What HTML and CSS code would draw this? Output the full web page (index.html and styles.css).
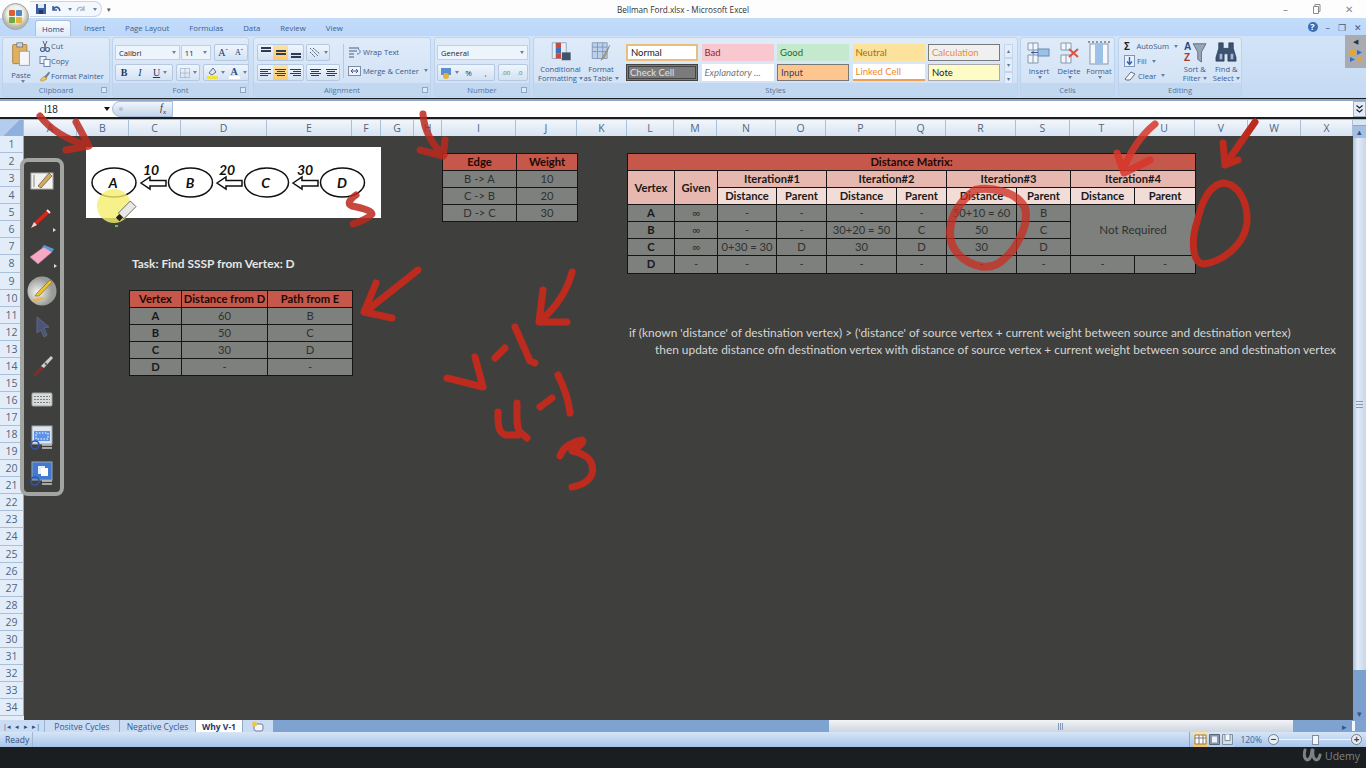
FILE: index.html
```html
<!DOCTYPE html>
<html lang="en">
<head>
    <meta charset="UTF-8">
    <title>Bellman Ford.xlsx - Microsoft Excel</title>
    <link rel="stylesheet" href="styles.css">
</head>
<body>
<div class="window">

    <!-- Title bar -->
    <div class="titlebar">
        <div class="qat">
            <svg width="12" height="12" viewBox="0 0 12 12"><rect x="1" y="1" width="10" height="10" fill="#3a5f9e"/><rect x="3" y="1" width="6" height="4" fill="#dfe8f5"/><rect x="4" y="7" width="4" height="4" fill="#1f3a6a"/></svg>
            <svg width="12" height="12" viewBox="0 0 12 12"><path d="M3 3 L3 7 L7 7 M3 7 C5 3 9 3 10 8" fill="none" stroke="#3a5f9e" stroke-width="1.6"/></svg>
            <span class="caret"></span>
            <svg width="12" height="12" viewBox="0 0 12 12"><path d="M9 3 L9 7 L5 7 M9 7 C7 3 3 3 2 8" fill="none" stroke="#a9b8cc" stroke-width="1.4"/></svg>
            <span class="caret"></span>
        </div>
        <span class="qat-more">&#9662;</span>
        <div class="title">Bellman Ford.xlsx - Microsoft Excel</div>
        <div class="winbtns">
            <span>&#8211;</span>
            <svg width="9" height="10" viewBox="0 0 9 10"><path d="M1.5 2.5h5v7h-5z M3 2.5v-2h5v7h-1.5" fill="none" stroke="#8a8a8a"/></svg>
            <span>&#10005;</span>
        </div>
    </div>

    <!-- Ribbon tabs -->
    <div class="tabs">
        <span class="tab active">Home</span>
        <span class="tab">Insert</span>
        <span class="tab">Page Layout</span>
        <span class="tab">Formulas</span>
        <span class="tab">Data</span>
        <span class="tab">Review</span>
        <span class="tab">View</span>
        <div class="tabs-right">
            <span class="help">?</span><span>&#8211;</span><span>&#10064;</span><span>&#10005;</span>
        </div>
    </div>

    <!-- Ribbon -->
    <div class="ribbon">
        <div class="group clipboard">
            <div class="group-body">
                <div class="big-btn paste">
                    <svg width="22" height="30" viewBox="0 0 22 30"><rect x="1" y="3" width="17" height="23" rx="1" fill="#e0b060" stroke="#a67b32"/><rect x="6" y="1" width="7" height="5" fill="#cfd6de" stroke="#777"/><rect x="9" y="11" width="12" height="17" fill="#f4f6f9" stroke="#8b97a6"/></svg>
                    <span>Paste</span>
                    <span class="caret"></span>
                </div>
                <div class="small-list">
                    <div class="small-item">
                        <svg width="12" height="12" viewBox="0 0 12 12"><path d="M4 1 L7 8 M8 1 L5 8" stroke="#5a6470" fill="none"/><circle cx="3.5" cy="9.5" r="2" fill="none" stroke="#46618c" stroke-width="1.2"/><circle cx="8.5" cy="9.5" r="2" fill="none" stroke="#46618c" stroke-width="1.2"/></svg>
                        Cut
                    </div>
                    <div class="small-item">
                        <svg width="12" height="12" viewBox="0 0 12 12"><rect x="1" y="1.5" width="6" height="7" fill="#eef2f8" stroke="#6b86ad"/><rect x="5" y="4.5" width="6" height="7" fill="#f8fafc" stroke="#6b86ad"/></svg>
                        Copy
                    </div>
                    <div class="small-item">
                        <svg width="12" height="12" viewBox="0 0 12 12"><path d="M5 7 L10 1.5 L11 3 L7 8.5 Z" fill="#6b7f9a"/><path d="M1 10 L5 6 L8 9 L3 11.5 Z" fill="#e8c25c" stroke="#a88425" stroke-width=".5"/></svg>
                        Format Painter
                    </div>
                </div>
            </div>
            <div class="group-label">Clipboard<i class="launcher"></i></div>
        </div>

        <div class="group font">
            <div class="group-body rows">
                <div class="row">
                    <span class="combo font-name">Calibri<span class="caret"></span></span>
                    <span class="combo font-size">11<span class="caret"></span></span>
                    <span class="btn-set">
                        <span class="btn serif">A<sup>&#710;</sup></span>
                        <span class="btn serif small">A<sup>&#711;</sup></span>
                    </span>
                </div>
                <div class="row">
                    <span class="btn-set">
                        <span class="btn serif"><b>B</b></span>
                        <span class="btn serif"><i>I</i></span>
                        <span class="btn serif underline"><u>U</u><span class="caret"></span></span>
                    </span>
                    <span class="btn-set">
                        <span class="btn wide">
                            <svg width="12" height="12" viewBox="0 0 12 12"><path d="M1.5 1.5h9v9h-9z M6 1.5v9 M1.5 6h9" fill="none" stroke="#8d9db3" stroke-dasharray="1 1"/></svg>
                            <span class="caret"></span>
                        </span>
                    </span>
                    <span class="btn-set">
                        <span class="btn wide">
                            <svg width="13" height="13" viewBox="0 0 13 13"><path d="M3 7 L7 2 L10 6 L6 9 Z" fill="#dfe6ef" stroke="#5a6f8c"/><rect x="1" y="10" width="11" height="3" fill="#f0e23a"/></svg>
                            <span class="caret"></span>
                        </span>
                        <span class="btn wide">
                            <svg width="13" height="13" viewBox="0 0 13 13"><text x="2.5" y="9" class="svg-a">A</text><rect x="1" y="10" width="11" height="3" fill="#fff"/></svg>
                            <span class="caret"></span>
                        </span>
                    </span>
                </div>
            </div>
            <div class="group-label">Font<i class="launcher"></i></div>
        </div>

        <div class="group alignment">
            <div class="group-body align-body">
                <div class="rows">
                    <div class="row">
                        <span class="btn-set">
                            <span class="btn bars top"><i></i><i></i></span>
                            <span class="btn bars mid on"><i></i><i></i></span>
                            <span class="btn bars bot"><i></i><i></i></span>
                        </span>
                        <span class="btn-set">
                            <span class="btn wide">
                                <svg width="13" height="12" viewBox="0 0 13 12"><path d="M1 1 L9 9 M4 1 L11 7 M1 5 L6 10" stroke="#4a5f7c" stroke-dasharray="2 1" fill="none"/></svg>
                                <span class="caret"></span>
                            </span>
                        </span>
                    </div>
                    <div class="row">
                        <span class="btn-set">
                            <span class="btn lines left"><i></i><i></i><i></i><i></i></span>
                            <span class="btn lines center on"><i></i><i></i><i></i><i></i></span>
                            <span class="btn lines right"><i></i><i></i><i></i><i></i></span>
                        </span>
                        <span class="btn-set">
                            <span class="btn lines center"><i></i><i></i><i></i><i></i></span>
                            <span class="btn lines center"><i></i><i></i><i></i><i></i></span>
                        </span>
                    </div>
                </div>
                <div class="small-list wrap-list">
                    <div class="small-item">
                        <svg width="13" height="12" viewBox="0 0 13 12"><path d="M1 2h10 M1 5h8 M1 8h5 M1 11h5" stroke="#4a5f7c" fill="none"/><path d="M10 3c3 1 3 5-1 5" stroke="#3d78c4" fill="none"/></svg>
                        Wrap Text
                    </div>
                    <div class="small-item">
                        <svg width="13" height="12" viewBox="0 0 13 12"><rect x=".5" y="1.5" width="12" height="9" fill="#eef3fa" stroke="#7d8ea6"/><path d="M3 6h7 M3 6l2-2 M3 6l2 2 M10 6l-2-2 M10 6l-2 2" stroke="#3d5a8a" fill="none"/></svg>
                        Merge &amp; Center<span class="caret"></span>
                    </div>
                </div>
            </div>
            <div class="group-label">Alignment<i class="launcher"></i></div>
        </div>

        <div class="group number">
            <div class="group-body rows">
                <div class="row">
                    <span class="combo number-format">General<span class="caret"></span></span>
                </div>
                <div class="row">
                    <span class="btn-set">
                        <span class="btn wide">
                            <svg width="13" height="12" viewBox="0 0 13 12"><rect x="1" y="1" width="10" height="7" fill="#5b8fd0"/><circle cx="6" cy="9" r="3" fill="#e3b43c"/></svg>
                            <span class="caret"></span>
                        </span>
                        <span class="btn num-btn">%</span>
                        <span class="btn num-btn">,</span>
                    </span>
                    <span class="btn-set">
                        <span class="btn num-tiny">.00</span>
                        <span class="btn num-tiny">.0</span>
                    </span>
                </div>
            </div>
            <div class="group-label">Number<i class="launcher"></i></div>
        </div>

        <div class="group styles">
            <div class="group-body styles-body">
                <div class="big-btn cond">
                    <svg width="24" height="24" viewBox="0 0 24 24"><path d="M2 2h16v18H2z" fill="#e8eef6" stroke="#8ea3c0"/><rect x="6" y="2" width="6" height="6" fill="#c84a3e"/><rect x="6" y="8" width="6" height="6" fill="#3f6fb8"/><rect x="6" y="14" width="6" height="6" fill="#c84a3e"/><rect x="13" y="13" width="10" height="9" fill="#42526a"/></svg>
                    <span>Conditional</span>
                    <span>Formatting<i class="caret"></i></span>
                </div>
                <div class="big-btn astable">
                    <svg width="24" height="24" viewBox="0 0 24 24"><path d="M2 2h17v18H2z" fill="#bcd0ea" stroke="#7d96b8"/><path d="M2 7h17 M2 12h17 M8 2v18 M14 2v18" stroke="#7d96b8"/><path d="M22 5 L14 18 L12 22 L16 19 Z" fill="#c9a25a" stroke="#76777a" stroke-width=".6"/></svg>
                    <span>Format</span>
                    <span>as Table<i class="caret"></i></span>
                </div>
                <div class="gallery">
                    <span class="style s-normal">Normal</span>
                    <span class="style s-bad">Bad</span>
                    <span class="style s-good">Good</span>
                    <span class="style s-neutral">Neutral</span>
                    <span class="style s-calc">Calculation</span>
                    <span class="style s-check">Check Cell</span>
                    <span class="style s-expl">Explanatory ...</span>
                    <span class="style s-input">Input</span>
                    <span class="style s-linked">Linked Cell</span>
                    <span class="style s-note">Note</span>
                </div>
                <div class="gallery-scroll"><i>&#9652;</i><i>&#9662;</i><i>&#9662;</i></div>
            </div>
            <div class="group-label">Styles</div>
        </div>

        <div class="group cells">
            <div class="group-body cells-body">
                <div class="big-btn cell-btn">
                    <svg width="24" height="24" viewBox="0 0 24 24"><path d="M1 2h10v7H1z M1 14h10v8H1z M6 2v7 M6 14v8" fill="#f2f5f9" stroke="#8698b0"/><rect x="11" y="8" width="11" height="7" fill="#9dc0e8" stroke="#6a8ab4"/><path d="M4 11.5h7 M7 9.5l-2 2 2 2" stroke="#3b5a85" fill="none"/></svg>
                    <span>Insert</span><i class="caret"></i>
                </div>
                <div class="big-btn cell-btn">
                    <svg width="24" height="24" viewBox="0 0 24 24"><path d="M4 2h10v7H4z M4 14h10v8H4z M9 2v7 M9 14v8" fill="#f2f5f9" stroke="#8698b0"/><path d="M12 8 L21 16 M21 8 L12 16" stroke="#d9533f" stroke-width="2"/></svg>
                    <span>Delete</span><i class="caret"></i>
                </div>
                <div class="big-btn cell-btn">
                    <svg width="24" height="24" viewBox="0 0 24 24"><rect x="3" y="3" width="18" height="20" fill="#f4f7fb" stroke="#8698b0"/><rect x="8" y="3" width="8" height="20" fill="#9dc0e8"/><path d="M1 1h22" stroke="#444" stroke-dasharray="2 2"/></svg>
                    <span>Format</span><i class="caret"></i>
                </div>
            </div>
            <div class="group-label">Cells</div>
        </div>

        <div class="group editing">
            <div class="group-body editing-body">
                <div class="small-list">
                    <div class="small-item"><span class="sigma">&#931;</span>AutoSum<span class="caret"></span></div>
                    <div class="small-item">
                        <svg width="11" height="12" viewBox="0 0 11 12"><rect x=".5" y=".5" width="10" height="11" fill="#eaf1fb" stroke="#7f97bb"/><path d="M5.5 2v7 M3 6.5l2.5 3 2.5-3" stroke="#2c63b5" fill="none" stroke-width="1.4"/></svg>
                        Fill<span class="caret"></span>
                    </div>
                    <div class="small-item">
                        <svg width="12" height="12" viewBox="0 0 12 12"><path d="M1 9 L7 2 L11 4 L6 10 H2 Z" fill="#f5f7fa" stroke="#5f6f86"/></svg>
                        Clear<span class="caret"></span>
                    </div>
                </div>
                <div class="big-btn sort-btn">
                    <svg width="26" height="24" viewBox="0 0 26 24"><text x="1" y="10" class="svg-az">A</text><text x="1" y="22" class="svg-az az-red">Z</text><path d="M11 3 H25 L20 12 V23 L16 20 V12 Z" fill="#9aa6b6" stroke="#5d6b80"/></svg>
                    <span>Sort &amp;</span>
                    <span>Filter<i class="caret"></i></span>
                </div>
                <div class="big-btn sort-btn">
                    <svg width="24" height="24" viewBox="0 0 24 24"><path d="M4 2h5v6h6V2h5v6l3 10v4h-9v-8H10v8H1v-4L4 8z" fill="#3d5270" stroke="#1f2f47" stroke-width=".6"/><rect x="5" y="14" width="3" height="6" fill="#9fb6d6"/><rect x="17" y="14" width="3" height="6" fill="#9fb6d6"/></svg>
                    <span>Find &amp;</span>
                    <span>Select<i class="caret"></i></span>
                </div>
            </div>
            <div class="group-label">Editing</div>
        </div>

        <div class="ribbon-side">
            <span class="side-arrow">&#9664;</span>
            <svg width="14" height="14" viewBox="0 0 14 14"><rect x="1" y="1" width="5" height="5" fill="#e2a63b"/><path d="M8 1 L13 3.5 L8 6 Z" fill="#2f6fc4"/><path d="M1 8 L6 10.5 L1 13 Z" fill="#2f6fc4"/><rect x="8" y="8" width="5" height="5" fill="#e2a63b"/></svg>
        </div>
    </div>

    <!-- Formula bar -->
    <div class="formula">
        <div class="namebox">I18<span class="caret dark"></span></div>
        <div class="fx-btn"><i class="fx-dot"></i><span>f<sub>x</sub></span></div>
        <div class="formula-input"></div>
        <div class="formula-expand">
            <svg width="9" height="10" viewBox="0 0 9 10"><path d="M1.5 1.5 L4.5 4 L7.5 1.5 M1.5 5.5 L4.5 8 L7.5 5.5" fill="none" stroke="#222" stroke-width="1.2"/></svg>
        </div>
    </div>

    <!-- Worksheet -->
    <div class="book">
        <div class="book-main">
            <div class="col-head">
                <span class="corner"></span>
                <span>A</span><span>B</span><span>C</span><span>D</span><span>E</span><span>F</span>
                <span>G</span><span>H</span><span>I</span><span>J</span><span>K</span><span>L</span>
                <span>M</span><span>N</span><span>O</span><span>P</span><span>Q</span><span>R</span>
                <span>S</span><span>T</span><span>U</span><span>V</span><span>W</span><span>X</span>
            </div>
            <div class="sheet-wrap">
                <div class="row-head">
                    <span>1</span><span>2</span><span>3</span><span>4</span><span>5</span><span>6</span><span>7</span>
                    <span>8</span><span>9</span><span>10</span><span>11</span><span>12</span><span>13</span><span>14</span>
                    <span>15</span><span>16</span><span>17</span><span>18</span><span>19</span><span>20</span><span>21</span>
                    <span>22</span><span>23</span><span>24</span><span>25</span><span>26</span><span>27</span><span>28</span>
                    <span>29</span><span>30</span><span>31</span><span>32</span><span>33</span><span>34</span>
                </div>
                <div class="sheet">
                    <div class="diagram">
                        <svg width="295" height="71" viewBox="0 0 295 71">
                            <ellipse cx="28" cy="35.5" rx="22" ry="14.5" class="node"/>
                            <ellipse cx="104.5" cy="35.5" rx="22" ry="14.5" class="node"/>
                            <ellipse cx="180.5" cy="35.5" rx="22" ry="14.5" class="node"/>
                            <ellipse cx="256.5" cy="35.5" rx="22" ry="14.5" class="node"/>
                            <text x="27" y="40.5" class="node-text">A</text>
                            <text x="104" y="40.5" class="node-text">B</text>
                            <text x="179.5" y="40.5" class="node-text">C</text>
                            <text x="256" y="40.5" class="node-text">D</text>
                            <path d="M55 36 L64 30 V33.5 H80 V39 H64 V42 Z" class="edge"/>
                            <path d="M131 36 L140 30 V33.5 H156 V39 H140 V42 Z" class="edge"/>
                            <path d="M207 36 L216 30 V33.5 H232 V39 H216 V42 Z" class="edge"/>
                            <text x="65" y="28" class="weight-text">10</text>
                            <text x="141" y="28" class="weight-text">20</text>
                            <text x="219" y="28" class="weight-text">30</text>
                        </svg>
                    </div>

                    <div class="edges">
                        <table>
                            <colgroup><col class="w74"><col class="w61"></colgroup>
                            <tr><th class="red">Edge</th><th class="red">Weight</th></tr>
                            <tr><td>B -&gt; A</td><td>10</td></tr>
                            <tr><td>C -&gt; B</td><td>20</td></tr>
                            <tr><td>D -&gt; C</td><td>30</td></tr>
                        </table>
                    </div>

                    <div class="matrix">
                        <table>
                            <colgroup>
                                <col class="w47"><col class="w43"><col class="w59"><col class="w50"><col class="w70">
                                <col class="w50"><col class="w70"><col class="w54"><col class="w64"><col class="w61">
                            </colgroup>
                            <tr><th class="red" colspan="10">Distance Matrix:</th></tr>
                            <tr>
                                <th class="pink" rowspan="2">Vertex</th>
                                <th class="pink" rowspan="2">Given</th>
                                <th class="pink" colspan="2">Iteration#1</th>
                                <th class="pink" colspan="2">Iteration#2</th>
                                <th class="pink" colspan="2">Iteration#3</th>
                                <th class="pink" colspan="2">Iteration#4</th>
                            </tr>
                            <tr>
                                <th class="pale">Distance</th><th class="pale">Parent</th>
                                <th class="pale">Distance</th><th class="pale">Parent</th>
                                <th class="pale">Distance</th><th class="pale">Parent</th>
                                <th class="pale">Distance</th><th class="pale">Parent</th>
                            </tr>
                            <tr>
                                <th>A</th><td>&#8734;</td><td>-</td><td>-</td><td>-</td><td>-</td><td>50+10 = 60</td><td>B</td>
                                <td class="not-required" colspan="2" rowspan="3">Not Required</td>
                            </tr>
                            <tr><th>B</th><td>&#8734;</td><td>-</td><td>-</td><td>30+20 = 50</td><td>C</td><td>50</td><td>C</td></tr>
                            <tr><th>C</th><td>&#8734;</td><td>0+30 = 30</td><td>D</td><td>30</td><td>D</td><td>30</td><td>D</td></tr>
                            <tr><th>D</th><td>-</td><td>-</td><td>-</td><td>-</td><td>-</td><td>-</td><td>-</td><td>-</td><td>-</td></tr>
                        </table>
                    </div>

                    <div class="task">Task: Find SSSP from Vertex: D</div>

                    <div class="answer">
                        <table>
                            <colgroup><col class="w52"><col class="w86"><col class="w85"></colgroup>
                            <tr><th class="red">Vertex</th><th class="red">Distance from D</th><th class="red">Path from E</th></tr>
                            <tr><th>A</th><td>60</td><td>B</td></tr>
                            <tr><th>B</th><td>50</td><td>C</td></tr>
                            <tr><th>C</th><td>30</td><td>D</td></tr>
                            <tr><th>D</th><td>-</td><td>-</td></tr>
                        </table>
                    </div>

                    <div class="note note-if">if (known 'distance' of destination vertex) &gt; ('distance' of source vertex + current weight between source and destination vertex)</div>
                    <div class="note note-then">then update distance ofn destination vertex with distance of source vertex + current weight between source and destination vertex</div>
                </div>
            </div>
        </div>
        <div class="vscroll">
            <i class="split"></i>
            <span class="arrow up">&#9652;</span>
            <div class="thumb"><i class="grip"></i></div>
            <div class="track"></div>
            <span class="arrow down">&#9662;</span>
        </div>
    </div>

    <!-- Sheet tabs and scrollbar -->
    <div class="sheet-tabs">
        <div class="tab-nav"><span>|&#9666;</span><span>&#9666;</span><span>&#9656;</span><span>&#9656;|</span></div>
        <span class="stab first">Positve Cycles</span>
        <span class="stab second">Negative Cycles</span>
        <span class="stab current">Why V-1</span>
        <span class="stab add">
            <svg width="14" height="11" viewBox="0 0 14 11"><rect x="3" y="3" width="9" height="7" rx="2" fill="#f3f6fb" stroke="#6e7f96"/><circle cx="3.5" cy="3" r="2.5" fill="#f2c34a"/></svg>
        </span>
        <div class="hscroll">
            <div class="hthumb"><i class="grip"></i></div>
            <span class="harrow">&#9656;</span>
            <i class="hsplit"></i>
        </div>
    </div>

    <!-- Status bar -->
    <div class="status">
        <span class="ready">Ready</span>
        <div class="status-right">
            <div class="views">
                <span class="view on"><svg width="13" height="11" viewBox="0 0 13 11"><path d="M1 1h11v9H1z M1 4h11 M5 1v9 M9 1v9" fill="#fff" stroke="#7d7d72"/></svg></span>
                <span class="view"><svg width="13" height="11" viewBox="0 0 13 11"><path d="M1.5 .5h10v10h-10z" fill="#8796a8" stroke="#58677a"/><rect x="4" y="2.5" width="5" height="6" fill="#eef2f8"/></svg></span>
                <span class="view"><svg width="13" height="11" viewBox="0 0 13 11"><path d="M1.5 .5h10v10h-10z" fill="#d4dde8" stroke="#7e8ea2"/><path d="M4 .5v6h5v-6" fill="#f7f9fc" stroke="#7e8ea2"/></svg></span>
            </div>
            <span class="zoom-val">120%</span>
            <span class="zoom-btn">&#8722;</span>
            <div class="slider"><i class="slider-thumb"></i></div>
            <span class="zoom-btn">+</span>
        </div>
    </div>

    <!-- Video strip under the window -->
    <div class="bottom">
        <div class="udemy">
            <svg width="20" height="15" viewBox="0 0 20 15"><path d="M3 3 Q1 11 5 13 Q9 13 10 3 M11 3 Q10 11 14 13 Q17 13 18 8" fill="none" stroke="#7f8284" stroke-width="3" stroke-linecap="round"/></svg>
            <span>Udemy</span>
        </div>
    </div>
</div>

<!-- Office button, lies over the title bar and tabs -->
<div class="office-btn">
    <svg width="27" height="27" viewBox="0 0 27 27">
        <defs><radialGradient id="orb" cx=".5" cy=".4"><stop offset=".6" stop-color="#f3f2ea"/><stop offset="1" stop-color="#b9b8a2"/></radialGradient></defs>
        <circle cx="13.5" cy="13.5" r="13" fill="url(#orb)" stroke="#9aa5b5"/>
        <rect x="7" y="7" width="6" height="6" rx="1" fill="#d8622f"/>
        <rect x="14" y="7" width="6" height="6" rx="1" fill="#4b86c6"/>
        <rect x="7" y="14" width="6" height="6" rx="1" fill="#6da944"/>
        <rect x="14" y="14" width="6" height="6" rx="1" fill="#e4b63c"/>
    </svg>
</div>

<!-- Pen palette floating over the sheet -->
<div class="palette">
    <svg width="26" height="28" viewBox="0 0 26 28"><rect x="2" y="6" width="22" height="16" fill="#f2f2f0" stroke="#aaa"/><rect x="4" y="8" width="2" height="12" fill="#bbb"/><path d="M9 19 L20 6 L23 9 L12 21 Z" fill="#d7a85a" stroke="#555" stroke-width=".7"/></svg>
    <svg width="30" height="28" viewBox="0 0 30 28"><path d="M4 24 L7 18 L21 5 L24 8 L10 21 Z" fill="#cf2a20" stroke="#7c1a14" stroke-width=".6"/><path d="M20 6 L23 9" stroke="#eee" stroke-width="2"/><path d="M4 24 L7 18 L10 21 Z" fill="#ddd"/><path d="M26 24 L29 26 L26 28 Z" fill="#ddd"/></svg>
    <svg width="30" height="28" viewBox="0 0 30 28"><path d="M3 17 L17 7 L25 12 L11 24 Z" fill="#f4a8c4" stroke="#c77d9c" stroke-width=".5"/><path d="M14 9 L17 5 L27 9 L25 12 L17 7 Z" fill="#4f9fe0"/><path d="M27 24 L30 26 L27 28 Z" fill="#ddd"/></svg>
    <svg width="30" height="30" viewBox="0 0 30 30"><defs><radialGradient id="penGlow" cx=".35" cy=".55"><stop offset="0" stop-color="#f6f6f2"/><stop offset="1" stop-color="#9a9c97"/></radialGradient></defs><circle cx="15" cy="15" r="14.5" fill="url(#penGlow)"/><path d="M8 20 L10 17 L23 4 L25 6 L12 20 Z" fill="#eec22e" stroke="#7a6210" stroke-width=".6"/><path d="M5 24 Q11 20 18 22 Q13 26 6 26 Z" fill="#e6b23f" opacity=".7"/></svg>
    <svg width="26" height="28" viewBox="0 0 26 28"><path d="M8 4 L8 20 L12 17 L15 24 L18 22 L15 15 L20 14 Z" fill="#4a5578" stroke="#5e6784"/></svg>
    <svg width="30" height="28" viewBox="0 0 30 28"><path d="M6 25 L14 16 L17 18 L9 26 Z" fill="#7f2e2a"/><path d="M14 16 L24 6 L26 8 L17 18 Z" fill="#cfcfcf"/><path d="M18 13 L20 15" stroke="#666" stroke-width="2"/></svg>
    <svg width="26" height="18" viewBox="0 0 26 18"><rect x="3" y="2" width="20" height="13" rx="1" fill="#d8dadb" stroke="#a0a3a5"/><path d="M5 5.5h16 M5 8.5h16 M5 11.5h16" stroke="#7d8082" stroke-dasharray="2 1"/></svg>
    <svg width="26" height="26" viewBox="0 0 26 26"><rect x="3" y="2" width="20" height="18" fill="#dfe5ef" stroke="#9aa5b5"/><rect x="5" y="7" width="16" height="10" fill="#5c93e8"/><rect x="7" y="9" width="12" height="6" fill="none" stroke="#fff" stroke-dasharray="1.5 1.5"/><circle cx="6" cy="21" r="4" fill="none" stroke="#3456a8" stroke-width="1.6"/><path d="M13 21h10 M13 24h10" stroke="#c8c8c8" stroke-width="1.5"/></svg>
    <svg width="26" height="26" viewBox="0 0 26 26"><rect x="3" y="2" width="20" height="18" fill="#4379cf" stroke="#9aa5b5"/><rect x="9" y="6" width="7" height="8" fill="#e8edf5"/><rect x="12" y="8" width="7" height="8" fill="#fff"/><circle cx="6" cy="21" r="4" fill="none" stroke="#3456a8" stroke-width="1.6"/><path d="M13 21h10 M13 24h10" stroke="#c8c8c8" stroke-width="1.5"/></svg>
</div>

<!-- Hand drawn annotations over the whole screen -->
<svg class="ink" width="1366" height="768" viewBox="0 0 1366 768">
    <circle cx="114" cy="206" r="17" class="highlight"/>
    <g transform="rotate(45 124 213)">
        <rect x="120" y="200" width="8" height="17" fill="#e8e8e4" stroke="#555" stroke-width=".8"/>
        <rect x="121.5" y="217" width="5" height="5" fill="#222"/>
    </g>
    <rect x="115" y="225" width="3" height="2" fill="#5fc44a"/>

    <g class="stroke faded">
        <path d="M40 116 Q55 136 88 146 M76 122 L89 146 L66 150"/>
        <path d="M423 114 C424 130 432 145 444 155 M445 140 L443 156 L420 150"/>
        <path d="M356 195 Q345 203 352 206 Q372 210 372 214 Q368 219 353 224"/>
        <path class="bright" d="M1155 124 Q1135 140 1123 170 M1117 153 L1124 173 L1150 160"/>
    </g>
    <g class="stroke">
        <path d="M418 270 L365 312 M376 283 L364 312 L392 318"/>
        <path d="M572 272 Q565 300 539 322 M543 290 L539 322 L567 322"/>
        <path d="M475 357 L483 387 L447 378"/>
        <path d="M495 358 L505 348"/>
        <path d="M515 327 L530 361 L535 363"/>
        <path d="M498 412 C498 425 498 433 506 435 L518 435 M517 403 C517 415 516 428 520 432 L527 438"/>
        <path d="M540 407 L552 398"/>
        <path d="M558 375 Q568 395 570 413"/>
        <path d="M560 456 Q564 444 582 440 Q586 442 572 451 Q596 456 592 474 Q588 484 572 487"/>
        <path d="M1255 122 L1225 165 M1223 143 L1225 165 L1238 160"/>
        <path d="M1222 183 C1240 183 1248 205 1247 222 C1245 245 1222 262 1203 264 C1192 262 1191 240 1197 222 C1201 205 1208 184 1224 183"/>
    </g>
    <path class="stroke ring" d="M975 190 C990 186 1018 192 1025 208 C1030 225 1015 250 1005 258 C992 272 972 268 958 254 C944 238 948 210 975 190"/>
</svg>
</body>
</html>
```

FILE: styles.css
```css
:root {
    --cols: 24px 53px 52px 52px 86px 85px 29px 33px 28px 74px 61px 50px 47px 43px 59px 50px 70px 50px 70px 54px 64px 61px 53px 53px 52px;
    --row: 17.07px;
    --ribbon-text: #3a5a88;
}

body {
    margin: 0;
    overflow: hidden;
    background: #1b1e20;
    font-family: "Open Sans", "Liberation Sans", sans-serif;
    font-size: 7.6px;
    color: var(--ribbon-text);
}

.window {
    display: flex;
    flex-direction: column;
    width: 1366px;
    height: 768px;
}

.caret {
    display: inline-block;
    width: 0;
    height: 0;
    margin-left: 3px;
    border-left: 2px solid transparent;
    border-right: 2px solid transparent;
    border-top: 3px solid #6d82a0;
    vertical-align: middle;
}
.caret.dark {
    border-left-width: 3px;
    border-right-width: 3px;
    border-top: 4px solid #111;
}

/* Title bar */
.titlebar {
    display: flex;
    align-items: center;
    height: 18px;
    padding-left: 30px;
    background: #fdfdfd;
    color: #444;
    position: relative;
}
.qat {
    display: flex;
    align-items: center;
    gap: 3px;
    height: 14px;
    padding: 0 4px 0 5px;
    border: 1px solid #c6d4e6;
    border-left: none;
    border-radius: 0 8px 8px 0;
    background: #f4f8fd;
}
.qat-more {
    margin-left: 5px;
    font-size: 7px;
    color: #555;
}
.title {
    position: absolute;
    left: 0;
    right: 0;
    text-align: center;
    font-size: 8.2px;
    color: #333;
}
.winbtns {
    display: flex;
    align-items: center;
    gap: 24px;
    margin-left: auto;
    padding-right: 13px;
    color: #8a8a8a;
    font-size: 10px;
}

/* Tabs */
.tabs {
    display: flex;
    align-items: flex-end;
    height: 18px;
    padding-left: 35px;
    background: linear-gradient(#c3dcfb, #bcd7fa);
}
.tab {
    padding: 0 10px;
    height: 16px;
    line-height: 16px;
    font-size: 7.8px;
    color: #41608c;
}
.tab.active {
    box-sizing: border-box;
    width: 36px;
    padding: 0;
    margin-right: 3px;
    text-align: center;
    background: linear-gradient(#fafcff, #dfeafa);
    border: 1px solid #a9c0de;
    border-bottom: none;
    border-radius: 3px 3px 0 0;
    color: #22416b;
}
.tabs-right {
    display: flex;
    align-items: center;
    gap: 8px;
    height: 18px;
    margin-left: auto;
    padding-right: 4px;
    color: #3c5d8b;
    font-size: 9px;
}
.help {
    width: 10px;
    height: 10px;
    line-height: 10px;
    border-radius: 50%;
    text-align: center;
    color: #fff;
    background: #3a6db5;
    font-weight: bold;
}

/* Ribbon */
.ribbon {
    display: flex;
    position: relative;
    height: 62px;
    padding: 1px 0 1px 2px;
    box-sizing: border-box;
    background: linear-gradient(#d3e4f8, #c4daf3);
}
.group {
    display: flex;
    flex-direction: column;
    box-sizing: border-box;
    border: 1px solid #bdd2ec;
    border-radius: 3px;
    background: linear-gradient(#dfebf9, #cfe0f5);
}
.clipboard { width: 108px; margin-right: 2px; }
.font { width: 137px; margin-right: 4px; }
.alignment { width: 178px; margin-right: 3px; }
.number { width: 96px; margin-right: 3px; }
.styles { width: 485px; margin-right: 2px; }
.cells { width: 95px; margin-right: 3px; }
.editing { width: 124px; }

.group-body {
    flex: 1;
    display: flex;
    min-height: 0;
}
.group-label {
    position: relative;
    height: 13px;
    line-height: 14px;
    text-align: center;
    font-size: 7.6px;
    color: #55769f;
    background: #c2d8f1;
}
.launcher {
    position: absolute;
    right: 2px;
    top: 4px;
    width: 4px;
    height: 4px;
    border: 1px solid #8fa7c6;
    background: #dde8f6;
}

.big-btn {
    display: flex;
    flex-direction: column;
    align-items: center;
    line-height: 10px;
    white-space: nowrap;
}
.big-btn i.caret {
    margin-left: 2px;
}
.paste {
    width: 36px;
    padding-top: 4px;
}
.paste span:first-of-type {
    margin-top: 3px;
}

.small-list {
    display: flex;
    flex-direction: column;
    padding-top: 1px;
}
.small-item {
    display: flex;
    align-items: center;
    gap: 2px;
    height: 16px;
    white-space: nowrap;
}
.clipboard .small-item {
    gap: 0;
}

.rows {
    display: flex;
    flex-direction: column;
    gap: 5px;
    padding: 7px 0 0 2px;
}
.row {
    display: flex;
    align-items: center;
    gap: 3px;
    height: 15px;
}
.combo {
    display: flex;
    align-items: center;
    justify-content: space-between;
    box-sizing: border-box;
    height: 15px;
    padding: 0 3px;
    background: #eef4fc;
    border: 1px solid #bcd0e8;
    color: #222;
}
.font-name { width: 67px; }
.font-size { width: 31px; margin-left: -2px; }
.number-format { width: 91px; }

.btn-set {
    display: flex;
    height: 15px;
    border: 1px solid #b4c8e2;
    border-radius: 2px;
    background: linear-gradient(#eff5fc, #d4e2f4);
}
.btn {
    display: flex;
    align-items: center;
    justify-content: center;
    min-width: 15px;
    height: 15px;
    font-size: 9px;
    color: #20395f;
}
.btn.on {
    background: linear-gradient(#fde3a7, #fbc96d);
}
.btn.wide {
    width: 22px;
}
.btn.wide .caret {
    margin-left: 2px;
}
.btn.serif {
    font-family: "Liberation Serif", serif;
    font-size: 10px;
    width: 16px;
}
.btn.underline {
    width: 24px;
}
.btn.small { font-size: 8px; }
.btn sup {
    font-size: 7px;
    line-height: 0;
    margin-top: -3px;
}
.svg-a {
    font: bold 10px "Liberation Serif", serif;
    fill: #2a4a88;
}

.bars {
    flex-direction: column;
    gap: 1px;
}
.bars i {
    display: block;
    width: 10px;
    height: 2px;
    background: #2e3d52;
}
.bars.top { justify-content: flex-start; padding-top: 2px; height: 13px; }
.bars.bot { justify-content: flex-end; padding-bottom: 2px; height: 13px; }

.lines {
    flex-direction: column;
    gap: 1px;
}
.lines i {
    display: block;
    width: 11px;
    height: 1px;
    background: #2e3d52;
}
.lines i:nth-child(even) { width: 8px; }
.lines.left { align-items: flex-start; padding-left: 2px; min-width: 13px; }
.lines.right { align-items: flex-end; padding-right: 2px; min-width: 13px; }
.btn-set + .btn-set .lines { min-width: 16px; }

.align-body .rows {
    padding-left: 3px;
}
.align-body .row {
    gap: 2px;
}
.wrap-list {
    height: 34px;
    margin: 6px 0 0 3px;
    padding: 0 0 0 4px;
    gap: 4px;
    border-left: 1px solid #b4c8e2;
}
.num-btn {
    font-size: 8px;
    min-width: 17px;
}
.num-tiny {
    font-size: 6px;
    min-width: 14px;
    color: #4a7a3c;
}

.styles-body {
    padding-left: 4px;
}
.cond, .astable {
    padding-top: 3px;
    line-height: 9px;
}
.cond { width: 45px; }
.astable { width: 36px; }
.cond svg, .astable svg {
    margin-bottom: 3px;
}
.gallery {
    display: grid;
    grid-template-columns: repeat(5, 72px);
    grid-template-rows: 17px 17px;
    gap: 3px 3.5px;
    margin: 6px 0 0 7px;
}
.style {
    display: flex;
    align-items: center;
    box-sizing: border-box;
    padding-left: 3px;
    font-family: Lato, "Liberation Sans", sans-serif;
    font-size: 9.5px;
    white-space: nowrap;
}
.s-normal { background: #fff; border: 2px solid #e8bf7a; color: #222; }
.s-bad { background: #f9c7ce; color: #9c1b26; }
.s-good { background: #c4e9cc; color: #1c6b30; }
.s-neutral { background: #fde29c; color: #a0710f; }
.s-calc { background: #f0f0f0; border: 1px solid #7a7a7a; color: #f08a2a; }
.s-check { background: #7b7b7b; border: 3px double #444; color: #e2e2e2; padding-left: 1px; }
.s-expl { background: #fff; color: #777; font-style: italic; }
.s-input { background: #fcc68e; border: 1px solid #777; color: #39406e; }
.s-linked { background: #fff; border-bottom: 2px solid #f0a050; color: #f08a2a; }
.s-note { background: #fdfbc6; border: 1px solid #a9a9a9; color: #222; }

.gallery-scroll {
    display: flex;
    flex-direction: column;
    width: 9px;
    margin: 6px 0 0 4px;
    height: 37px;
}
.gallery-scroll i {
    flex: 1;
    font-style: normal;
    font-size: 6px;
    line-height: 12px;
    text-align: center;
    background: #e4eefb;
    border: 1px solid #c4d6ec;
    color: #5c7699;
}

.cells-body {
    padding: 3px 0 0 3px;
}
.cell-btn {
    width: 30px;
}
.cell-btn svg {
    margin-bottom: 1px;
}
.editing-body {
    padding-left: 5px;
    gap: 2px;
}
.sigma {
    width: 11px;
    font-weight: bold;
    font-size: 10px;
    color: #222;
}
.editing .small-list {
    width: 54px;
}
.sort-btn {
    width: 30px;
    padding-top: 3px;
    line-height: 9px;
}
.sort-btn svg {
    margin-bottom: 2px;
}
.svg-az {
    font: bold 11px "Liberation Sans", sans-serif;
    fill: #2a4a88;
}
.az-red { fill: #a33a2a; }

.ribbon-side {
    position: absolute;
    right: 0;
    top: -1px;
    display: flex;
    flex-direction: column;
    align-items: center;
    gap: 3px;
    width: 21px;
    height: 33px;
    background: #a9abb0;
}
.side-arrow {
    font-size: 7px;
    color: #333;
    margin-top: 2px;
}

/* Formula bar */
.formula {
    display: flex;
    height: 16px;
    margin-top: 3px;
    background: #fff;
    box-shadow: 0 -2px 0 #8fa8c8;
}
.namebox {
    display: flex;
    align-items: center;
    justify-content: space-between;
    box-sizing: border-box;
    width: 112px;
    padding: 0 2px 0 44px;
    font: 10px "Liberation Sans", sans-serif;
    color: #222;
}
.fx-btn {
    display: flex;
    align-items: center;
    justify-content: space-between;
    box-sizing: border-box;
    width: 61px;
    padding: 0 6px;
    border-radius: 8px 0 0 8px;
    border: 1px solid #a9bfdb;
    background: linear-gradient(#f1f5fa, #c2d5ec);
    font: italic 10px "Liberation Serif", serif;
    color: #333;
}
.fx-btn sub {
    font-size: 7px;
}
.fx-dot {
    width: 4px;
    height: 4px;
    border-radius: 50%;
    background: #b6c2d0;
}
.formula-input {
    flex: 1;
}
.formula-expand {
    display: flex;
    align-items: center;
    justify-content: center;
    box-sizing: border-box;
    width: 13px;
    border: 1px solid #9db2cd;
    background: #e3ebf6;
}

/* Worksheet */
.book {
    display: flex;
    margin-top: 3px;
    height: 600px;
    box-shadow: 0 -1px 0 #a8bcd6;
}
.book-main {
    width: 1353px;
}
.col-head {
    display: grid;
    grid-template-columns: var(--cols);
    height: 16px;
    background: linear-gradient(#f2f6fb, #d7e4f2);
}
.col-head span {
    box-sizing: border-box;
    border-right: 1px solid #a9c0d8;
    text-align: center;
    font: 10.5px/16px "Open Sans", sans-serif;
    color: #4f6580;
}
.col-head .corner {
    background: linear-gradient(135deg, #b4cdee 50%, #8fb0dc 50%);
}
.sheet-wrap {
    display: flex;
    height: 584px;
    background: #3f403e;
}
.row-head {
    display: grid;
    grid-auto-rows: var(--row);
    flex: 0 0 24px;
    align-content: start;
    height: 100%;
    background: #e3edf9;
}
.row-head span {
    box-sizing: border-box;
    border-bottom: 1px solid #a9c0d8;
    border-right: 1px solid #8fa8c4;
    text-align: center;
    font: 10.5px/16px "Open Sans", sans-serif;
    color: #4f6580;
}

.sheet {
    display: grid;
    grid-template-columns: 53px 52px 52px 86px 85px 29px 33px 28px 74px 61px 50px 47px 43px 59px 50px 70px 50px 70px 54px 64px 61px 53px 53px 52px;
    grid-template-rows: repeat(34, var(--row));
    font-family: Lato, "Liberation Sans", sans-serif;
    font-size: 11.9px;
}
.diagram {
    grid-column: 2 / 7;
    grid-row: 1 / 6;
    margin: 10.5px 0 0 9px;
    height: 71px;
    background: #fff;
}
.diagram svg {
    display: block;
}
.node, .edge {
    fill: #fff;
    stroke: #111;
    stroke-width: 1.5;
}
.node-text, .weight-text {
    font: italic bold 14px Lato, "Liberation Sans", sans-serif;
    text-anchor: middle;
    fill: #111;
}

.edges, .matrix, .answer {
    margin-right: 1px;
}
.edges {
    grid-column: 9 / 11;
    grid-row: 2 / 6;
}
.matrix {
    grid-column: 12 / 22;
    grid-row: 2 / 9;
}
.answer {
    grid-column: 3 / 6;
    grid-row: 10 / 15;
}
.task {
    grid-column: 3 / 7;
    grid-row: 8;
    padding-left: 3px;
    font-weight: bold;
    line-height: 18px;
    color: #e6e6e6;
    white-space: nowrap;
}
.note {
    grid-row: 12;
    grid-column: 12 / 25;
    padding-left: 2px;
    line-height: 17px;
    color: #d5d5d3;
    white-space: nowrap;
}
.note-then {
    grid-row: 13;
    padding-left: 28px;
}

table {
    table-layout: fixed;
    width: 100%;
    border-collapse: collapse;
}
tr {
    height: var(--row);
}
th, td {
    padding: 0;
    border: 1px solid #151515;
    background: #7e807d;
    text-align: center;
    line-height: 14px;
    font-size: 11.2px;
    color: #303230;
    overflow: hidden;
    white-space: nowrap;
}
th {
    color: #191919;
}
th.red {
    background: #c5584a;
    color: #1e0805;
}
th.pink {
    background: #e6b8b0;
}
th.pale {
    background: #f2dcd8;
}
.not-required {
    font-size: 11.6px;
}
.w43 { width: 43px; }
.w47 { width: 47px; }
.w50 { width: 50px; }
.w52 { width: 52px; }
.w54 { width: 54px; }
.w59 { width: 59px; }
.w61 { width: 61px; }
.w64 { width: 64px; }
.w70 { width: 70px; }
.w74 { width: 74px; }
.w85 { width: 85px; }
.w86 { width: 86px; }

/* Vertical scrollbar */
.vscroll {
    display: flex;
    flex-direction: column;
    width: 13px;
    background: #7c9fce;
}
.split {
    display: block;
    height: 5px;
    background: #dbe6f4;
    border-bottom: 1px solid #8da7c8;
}
.arrow {
    height: 12px;
    line-height: 12px;
    text-align: center;
    font-size: 9px;
    color: #34558a;
}
.arrow.up {
    background: #a3bfe2;
}
.thumb {
    display: flex;
    align-items: center;
    justify-content: center;
    height: 532px;
    background: linear-gradient(90deg, #a9c2e0, #e4ecf6 35%, #c7d7ea);
}
.grip {
    display: block;
    width: 7px;
    height: 5px;
    border-top: 1px solid #8198b6;
    border-bottom: 1px solid #8198b6;
    background: linear-gradient(#8198b6, #8198b6) 0 2px / 7px 1px no-repeat;
}
.track {
    flex: 1;
}

/* Sheet tabs and horizontal scrollbar */
.sheet-tabs {
    display: flex;
    align-items: stretch;
    height: 12px;
    background: #c9dcf3;
}
.tab-nav {
    display: flex;
    align-items: center;
    justify-content: space-between;
    box-sizing: border-box;
    width: 45px;
    padding: 0 4px 0 3px;
    font-size: 7px;
    color: #2e4d7a;
    border-right: 1px solid #9ab2d0;
}
.stab {
    display: flex;
    align-items: center;
    justify-content: center;
    box-sizing: border-box;
    border-right: 1px solid #8fa8c8;
    color: #3a5a88;
    font-size: 8.5px;
    white-space: nowrap;
}
.stab.first { width: 75px; }
.stab.second { width: 76px; }
.stab.current {
    width: 47px;
    background: #fff;
    font-weight: bold;
    color: #1f3a6a;
}
.stab.add {
    width: 30px;
    border-right: none;
}
.hscroll {
    flex: 1;
    position: relative;
    display: flex;
    align-items: center;
    justify-content: flex-end;
    background: #7ea3d0;
}
.hthumb {
    position: absolute;
    left: 556px;
    top: 0;
    bottom: 0;
    width: 464px;
    display: flex;
    align-items: center;
    justify-content: center;
    background: linear-gradient(#f2f4f7, #cdd5df);
}
.hthumb .grip {
    width: 6px;
    height: 7px;
    border: none;
    background: repeating-linear-gradient(90deg, #8198b6 0 1px, transparent 1px 2px);
}
.harrow {
    margin-right: 5px;
    font-size: 9px;
    color: #34558a;
}
.hsplit {
    width: 3px;
    height: 10px;
    margin-right: 11px;
    background: #f4f7fb;
}

/* Status bar */
.status {
    display: flex;
    align-items: center;
    height: 15px;
    background: linear-gradient(#d6e5f7, #a8c5ea);
    font-size: 8.5px;
    color: #33507c;
}
.ready {
    width: 33px;
    padding-left: 5px;
    box-sizing: border-box;
    border-right: 1px solid #a0b8d8;
    line-height: 15px;
}
.status-right {
    display: flex;
    align-items: center;
    height: 15px;
    margin-left: auto;
    padding-right: 4px;
    border-left: 1px solid #8da7c8;
}
.views {
    display: flex;
    margin-left: 4px;
}
.view {
    display: flex;
    align-items: center;
    justify-content: center;
    width: 13.5px;
    height: 15px;
    background: linear-gradient(#dae6f5, #b7cee9);
}
.view.on {
    background: linear-gradient(#fde3a7, #f6c260);
}
.zoom-val {
    margin: 0 6px;
    color: #3e6398;
}
.zoom-btn {
    width: 11px;
    height: 11px;
    box-sizing: border-box;
    border: 1px solid #6f7f93;
    border-radius: 50%;
    background: #e9eef5;
    text-align: center;
    line-height: 8px;
    font-size: 10px;
    font-weight: bold;
    color: #444;
}
.slider {
    position: relative;
    width: 72px;
    height: 1px;
    background: #f0f4fa;
}
.slider-thumb {
    position: absolute;
    left: 33px;
    top: -4px;
    width: 5px;
    height: 8px;
    background: #f3f6fa;
    border: 1px solid #7f8fa3;
}

/* Bottom strip */
.bottom {
    flex: 1;
    display: flex;
    justify-content: flex-end;
    background: #1b1e20;
}
.udemy {
    display: flex;
    align-items: flex-start;
    gap: 3px;
    padding-right: 6px;
    font: 10.5px/18px "Open Sans", sans-serif;
    color: #7f8284;
}

/* Things lying over the window */
.office-btn {
    position: absolute;
    left: 2px;
    top: 3px;
    width: 27px;
    height: 27px;
}
.palette {
    position: absolute;
    left: 20px;
    top: 158px;
    box-sizing: border-box;
    width: 44px;
    height: 338px;
    padding-top: 1px;
    display: grid;
    grid-auto-rows: 36.5px;
    justify-items: center;
    align-items: center;
    border: 4px solid #a3a5a2;
    border-radius: 8px;
    background: #3f403e;
}
.ink {
    position: absolute;
    left: 0;
    top: 0;
    pointer-events: none;
    filter: blur(.5px);
}
.highlight {
    fill: #f4ee6a;
    opacity: .8;
}
.stroke {
    fill: none;
    stroke: #bd2a1e;
    stroke-width: 7;
    stroke-linecap: round;
    stroke-linejoin: round;
}
.faded {
    opacity: .85;
}
.bright {
    stroke: #d8352a;
}
.ring {
    stroke: #cc2c20;
    stroke-width: 8;
    opacity: .75;
}
```
